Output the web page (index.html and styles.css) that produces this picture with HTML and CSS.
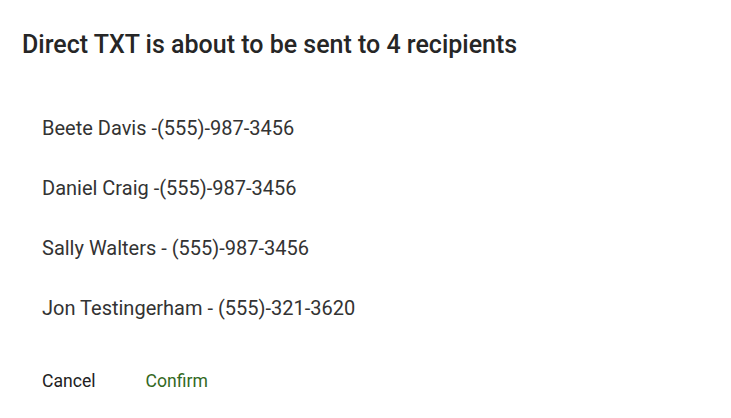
FILE: index.html
```html
<!DOCTYPE html>
<html lang="en">
<head>
  <meta charset="UTF-8">
  <title>Direct TXT</title>
  <link rel="stylesheet" href="styles.css">
</head>
<body>
  <div class="dialog">
    <h2 class="dialog-title">Direct TXT is about to be sent to 4 recipients</h2>
    <ul class="recipients">
      <li>Beete Davis -(555)-987-3456</li>
      <li>Daniel Craig -(555)-987-3456</li>
      <li>Sally Walters - (555)-987-3456</li>
      <li>Jon Testingerham - (555)-321-3620</li>
    </ul>
    <div class="actions">
      <button class="btn btn-cancel">Cancel</button>
      <button class="btn btn-confirm">Confirm</button>
    </div>
  </div>
</body>
</html>
```

FILE: styles.css
```css
body {
  margin: 0;
  background: #fff;
  font-family: Roboto, "Liberation Sans", sans-serif;
  color: #212121;
}
.dialog {
  padding: 30px 22px 0;
}
.dialog-title {
  margin: 0;
  font-size: 25px;
  line-height: 30px;
  font-weight: 500;
  color: #262626;
}
.recipients {
  list-style: none;
  margin: 38px 0 0;
  padding: 0 0 0 20px;
}
.recipients li {
  font-size: 20px;
  line-height: 60px;
  color: #333;
}
.actions {
  display: flex;
  gap: 50px;
  margin-top: 25px;
  padding-left: 20px;
}
.btn {
  background: none;
  border: none;
  padding: 0;
  height: 36px;
  font-family: inherit;
  font-size: 17.6px;
  font-weight: 400;
  cursor: pointer;
}
.btn-cancel {
  color: #212121;
}
.btn-confirm {
  color: #33691e;
}
```
